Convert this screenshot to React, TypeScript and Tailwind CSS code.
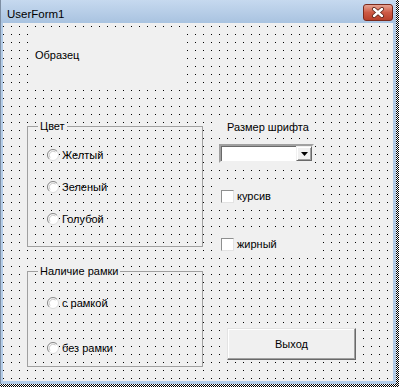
import React from 'react';

// VBA UserForm in design mode: grey form, dot grid, classic 3D controls
const font = "font-['Liberation_Sans',Arial,sans-serif]";
const grid =
  "bg-black bg-[image:linear-gradient(90deg,transparent_1px,#f0f0f0_1px),linear-gradient(180deg,transparent_1px,#f0f0f0_1px)] bg-[length:8px_8px] bg-[position:0px_3px]";

const Radio = () => (
  <svg width="12" height="12" viewBox="0 0 12 12" className="shrink-0">
    <circle cx="6" cy="6" r="5.5" fill="#fff" stroke="#dcdcdc" />
    <path d="M2.1 9.9 A5.5 5.5 0 0 1 9.9 2.1" fill="none" stroke="#8a8a8a" />
    <path d="M3 8.6 A4 4 0 0 1 8.6 3" fill="none" stroke="#c8c8c8" />
  </svg>
);

const Option = ({ label, className }: { label: string; className: string }) => (
  <div className={`flex items-center h-[18px] pl-[19px] gap-[3px] ${className}`}>
    <Radio />
    <span>{label}</span>
  </div>
);

const Check = ({ label, className }: { label: string; className: string }) => (
  <div className={`flex items-center gap-[3px] h-[24px] w-[102px] pl-[2px] bg-[#f0f0f0] ${className}`}>
    <div className="w-[13px] h-[13px] bg-white border border-[#8e8f8f] border-r-[#e3e3e3] border-b-[#e3e3e3]" />
    <span>{label}</span>
  </div>
);

const Frame = ({
  title,
  className,
  children,
}: {
  title: string;
  className: string;
  children: React.ReactNode;
}) => (
  <div className={`flex flex-col w-[176px] border border-[#a0a0a0] ${className}`}>
    <span className="self-start whitespace-nowrap -mt-[7px] ml-[10px] px-[2px] bg-[#f0f0f0] leading-[13px]">{title}</span>
    {children}
  </div>
);

export default function App() {
  return (
    <div
      className={`w-[399px] h-[387px] overflow-hidden bg-white bg-[image:repeating-conic-gradient(#000_0_25%,#fff_0_50%)] bg-[length:2px_2px] ${font} text-[11px] text-black`}
    >
      <div className="w-[396px] h-[384px] flex flex-col bg-[#b3cce8] border-l border-[#7d8ea3]">
        {/* title bar */}
        <div className="h-[23px] shrink-0 flex justify-between bg-gradient-to-b from-[#c6d9ef] to-[#a9c3e0]">
          <span className="pl-[6px] pt-[7px] text-[11.5px] leading-[14px]">UserForm1</span>
          <div className="mt-[4px] mr-[3px] w-[30px] h-[17px] rounded-[3px] border border-[#7b2a1d] bg-gradient-to-b from-[#e6a393] via-[#cd5a45] to-[#b8402b] flex items-center justify-center">
            <svg width="14" height="11" viewBox="0 0 14 11">
              <path d="M3 2 L11 9 M11 2 L3 9" stroke="#5a2318" strokeWidth="4" strokeLinecap="round" />
              <path d="M3 2 L11 9 M11 2 L3 9" stroke="#fff" strokeWidth="2.4" strokeLinecap="round" />
            </svg>
          </div>
        </div>

        {/* client area */}
        <div className={`flex-1 ml-[2px] mr-[3px] mb-[3px] flex pl-[24px] pt-[11px] ${grid}`}>
          <div className="flex flex-col w-[176px]">
            <div className="ml-[1px] w-[158px] h-[52px] bg-[#f0f0f0] pl-[7px] pt-[15px] leading-[13px]">Образец</div>

            <Frame title="Цвет" className="mt-[40px] h-[121px]">
              <Option label="Желтый" className="mt-[13px]" />
              <Option label="Зеленый" className="mt-[14px]" />
              <Option label="Голубой" className="mt-[14px]" />
            </Frame>

            <Frame title="Наличие рамки" className="mt-[24px] h-[96px]">
              <Option label="с рамкой" className="mt-[16px]" />
              <Option label="без рамки" className="mt-[27px]" />
            </Frame>
          </div>

          <div className="flex flex-col ml-[16px]">
            <div className="mt-[86px] w-[96px] h-[15px] bg-[#f0f0f0] pl-[8px] pt-[1px] leading-[13px] whitespace-nowrap">Размер шрифта</div>

            <div className="mt-[9px] w-[95px] h-[19px] flex bg-white border-2 border-t-[#a0a0a0] border-l-[#a0a0a0] border-r-[#f0f0f0] border-b-[#f0f0f0] shadow-[inset_1px_1px_0_#696969]">
              <div className="ml-auto w-[16px] h-full bg-[#f0f0f0] border border-t-[#f0f0f0] border-l-[#f0f0f0] border-r-[#696969] border-b-[#696969] shadow-[inset_1px_1px_0_#fff,inset_-1px_-1px_0_#a0a0a0] flex items-center justify-center">
                <svg width="7" height="4" viewBox="0 0 7 4">
                  <path d="M0 0 H7 L3.5 4 Z" fill="#000" />
                </svg>
              </div>
            </div>

            <Check label="курсив" className="mt-[21px]" />
            <Check label="жирный" className="mt-[24px]" />

            <button className="mt-[72px] ml-[8px] w-[129px] h-[32px] bg-[#f0f0f0] border border-t-[#e3e3e3] border-l-[#e3e3e3] border-r-[#696969] border-b-[#696969] shadow-[inset_-1px_-1px_0_#a0a0a0,inset_1px_1px_0_#fff] text-[11px] leading-[13px]">
              Выход
            </button>
          </div>
        </div>
      </div>
    </div>
  );
}
